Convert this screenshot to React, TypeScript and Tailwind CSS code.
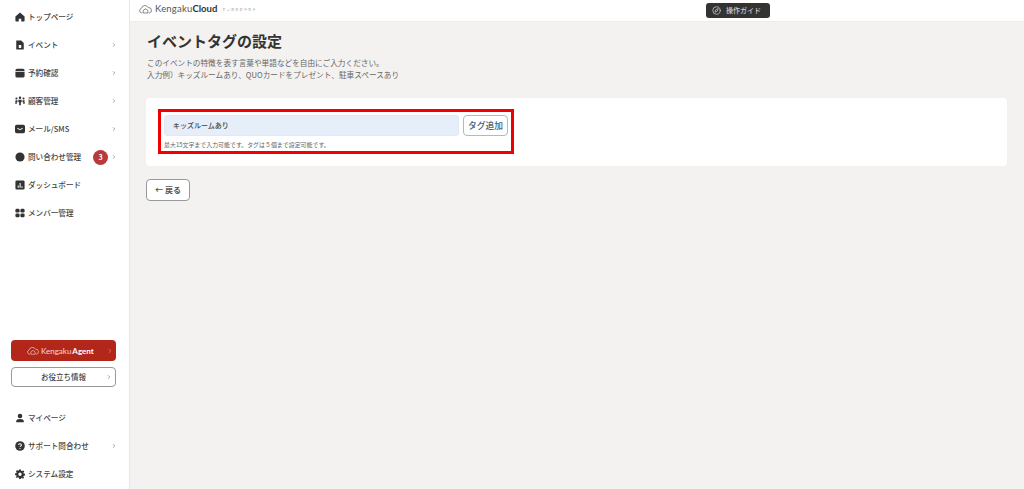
import { ChevronRight, Compass } from 'lucide-react';
import type { ReactNode } from 'react';

const icon = 'w-[10px] h-[10px] text-[#333] shrink-0';

const HomeIcon = () => (
    <svg viewBox="0 0 24 24" className={icon} fill="currentColor">
        <path d="M12 1 1 10.500V21a2 2 0 0 0 2 2h6v-7h6v7h6a2 2 0 0 0 2-2V10.500z" />
    </svg>
);
const FileIcon = () => (
    <svg viewBox="0 0 24 24" className={icon} fill="currentColor">
        <path fillRule="evenodd" d="M3 1h12l6 6v16H3zM9 12v7h6v-7z" />
    </svg>
);
const CalendarIcon = () => (
    <svg viewBox="0 0 24 24" className={icon} fill="currentColor">
        <path d="M5 2h14a4 4 0 0 1 4 4v2H1V6a4 4 0 0 1 4-4zM1 9.500h22V19a4 4 0 0 1-4 4H5a4 4 0 0 1-4-4z" />
    </svg>
);
const PeopleIcon = () => (
    <svg viewBox="0 0 24 24" className={icon} fill="currentColor">
        <circle cx="12" cy="4" r="3" />
        <circle cx="3.500" cy="6" r="2.500" />
        <circle cx="20.500" cy="6" r="2.500" />
        <path d="M8 9h8v6h-2v7h-4v-7H8z" />
        <path d="M1 10h5v5H4v4H1zM18 10h5v9h-3v-4h-2z" />
    </svg>
);
const MailIcon = () => (
    <svg viewBox="0 0 24 24" className={icon} fill="currentColor">
        <path fillRule="evenodd" d="M4 2h16a4 4 0 0 1 4 4v12a4 4 0 0 1-4 4H4a4 4 0 0 1-4-4V6a4 4 0 0 1 4-4zm2 7-1 1.500 7 4.500 7-4.500L18 9l-6 3.800z" />
    </svg>
);
const DotIcon = () => (
    <svg viewBox="0 0 24 24" className={icon} fill="currentColor">
        <circle cx="12" cy="12" r="11" />
    </svg>
);
const ChartIcon = () => (
    <svg viewBox="0 0 24 24" className={icon} fill="currentColor">
        <path fillRule="evenodd" d="M4 1h16a3 3 0 0 1 3 3v16a3 3 0 0 1-3 3H4a3 3 0 0 1-3-3V4a3 3 0 0 1 3-3zm2.500 12v5.500h2.500V13zm4.500-6v11.500h2.500V7zm4.500 8v3.500H18V15z" />
    </svg>
);
const GridIcon = () => (
    <svg viewBox="0 0 24 24" className={icon} fill="currentColor">
        <rect x="1" y="2" width="10" height="9" rx="3" />
        <rect x="13" y="2" width="10" height="9" rx="3" />
        <rect x="1" y="13" width="10" height="9" rx="3" />
        <rect x="13" y="13" width="10" height="9" rx="3" />
    </svg>
);
const UserIcon = () => (
    <svg viewBox="0 0 24 24" className={icon} fill="currentColor">
        <circle cx="12" cy="7" r="5.500" />
        <path d="M3 22v-2c0-3.500 3-5.500 9-5.500s9 2 9 5.500v2z" />
    </svg>
);
const HelpIcon = () => (
    <svg viewBox="0 0 24 24" className={icon}>
        <circle cx="12" cy="12" r="11.500" fill="currentColor" />
        <path d="M8.500 9.500C8.500 7.500 10 6.500 12 6.500s3.500 1.200 3.500 3c0 2.800-3.500 2.500-3.500 5" fill="none" stroke="#fff" strokeWidth="2.500" />
        <circle cx="12" cy="18" r="1.500" fill="#fff" />
    </svg>
);
const GearIcon = () => (
    <svg viewBox="0 0 24 24" className={icon} fill="currentColor">
        <path fillRule="evenodd" d="M10 1h4l.6 3 2.400 1 2.600-1.700 2.800 2.800L20 8.700l1 2.300 3 .6v3.800l-3 .6-1 2.300 1.700 2.600-2.800 2.800L17.300 21l-2.700 1-.6 2h-4l-.6-3-2.400-1-2.600 1.700-2.800-2.800L4 17.300 3 15l-3-.6v-3.800l3-.6 1-2.300L2.300 5.100l2.800-2.800L7 4l2.400-1zM12 8.500a4 4 0 1 0 0 8 4 4 0 0 0 0-8z" />
    </svg>
);

// cloud + house mark next to the product names
const CloudLogo = ({ className }: { className: string }) => (
    <svg viewBox="0 0 28 18" className={className} fill="none" stroke="currentColor" strokeWidth="1.500">
        <path d="M7 16.500H6a5 5 0 0 1-1-9.800A8 8 0 0 1 20 5a5.800 5.800 0 0 1 2 11.500h-1" />
        <path d="M9 16.500V11l5-3.500 5 3.500v5.500z" />
    </svg>
);

interface NavItem {
    label: string;
    icon: ReactNode;
    arrow?: boolean;
    badge?: string;
}

const mainNav: NavItem[] = [
    { label: 'トップページ', icon: <HomeIcon /> },
    { label: 'イベント', icon: <FileIcon />, arrow: true },
    { label: '予約確認', icon: <CalendarIcon />, arrow: true },
    { label: '顧客管理', icon: <PeopleIcon />, arrow: true },
    { label: 'メール/SMS', icon: <MailIcon />, arrow: true },
    { label: '問い合わせ管理', icon: <DotIcon />, arrow: true, badge: '3' },
    { label: 'ダッシュボード', icon: <ChartIcon /> },
    { label: 'メンバー管理', icon: <GridIcon /> },
];

const subNav: NavItem[] = [
    { label: 'マイページ', icon: <UserIcon /> },
    { label: 'サポート問合わせ', icon: <HelpIcon />, arrow: true },
    { label: 'システム設定', icon: <GearIcon /> },
];

function NavRow({ item }: { item: NavItem }) {
    return (
        <div className="h-[28px] pl-[15px] pr-[12px] flex items-center">
            {item.icon}
            <span className="ml-[3px] text-[7.6px] font-medium text-[#444] whitespace-nowrap">{item.label}</span>
            <div className="ml-auto flex items-center gap-[3px]">
                {item.badge && (
                    <span className="w-[15px] h-[15px] rounded-full bg-[#b93a3a] text-white text-[7px] font-bold flex items-center justify-center">
                        {item.badge}
                    </span>
                )}
                {item.arrow && <ChevronRight className="w-[6px] h-[6px] text-[#777]" strokeWidth={2.5} />}
            </div>
        </div>
    );
}

export default function App() {
    return (
        <div className="w-[1024px] h-[489px] overflow-hidden flex bg-[#f3f2f0] font-['Noto_Sans_CJK_JP','Noto_Sans',sans-serif]">
            {/* Sidebar */}
            <aside className="w-[130px] shrink-0 bg-white border-r border-[#e6e6e6] flex flex-col pt-[3px] pb-[1px]">
                {mainNav.map((item) => (
                    <NavRow key={item.label} item={item} />
                ))}

                <div className="mt-auto pl-[11px] pr-[13px] flex flex-col gap-[6px] mb-[17px]">
                    <div className="h-[21px] rounded-[4px] bg-[#b3261a] flex items-center relative pl-[16px] text-white/80">
                        <CloudLogo className="w-[12px] h-[8px] mr-[2px]" />
                        <span className="text-[8px] font-['Lato',sans-serif]">Kengaku</span>
                        <span className="ml-[1px] text-[8px] font-bold text-white font-['Lato',sans-serif]">Agent</span>
                        <ChevronRight className="absolute right-[3px] w-[6px] h-[6px] text-white/50" strokeWidth={2.5} />
                    </div>
                    <div className="h-[20px] rounded-[4px] bg-white border-[1.5px] border-[#999] flex items-center justify-center relative">
                        <span className="text-[7.5px] font-medium text-[#444]">お役立ち情報</span>
                        <ChevronRight className="absolute right-[3px] w-[6px] h-[6px] text-[#777]" strokeWidth={2.5} />
                    </div>
                </div>

                {subNav.map((item) => (
                    <NavRow key={item.label} item={item} />
                ))}
            </aside>

            <div className="flex-1 min-w-0 flex flex-col">
                {/* Header */}
                <header className="h-[22px] shrink-0 bg-white border-b border-[#ececec] flex items-center relative pl-[9px] pb-[2px]">
                    <CloudLogo className="w-[13px] h-[9px] text-[#555] mr-[3px]" />
                    <span className="text-[9.5px] text-[#555] font-['Lato',sans-serif] tracking-[0.2px]">Kengaku</span>
                    <span className="text-[9.5px] font-bold text-[#333] font-['Lato',sans-serif]">Cloud</span>
                    <span className="ml-[5px] text-[3.5px] text-[#777] tracking-[0.8px]">ケンガククラウド</span>
                    <div className="absolute left-[576px] top-[3px] w-[64px] h-[15px] rounded-[3px] bg-[#333] flex items-center pl-[6px] gap-[5px]">
                        <Compass className="w-[9px] h-[9px] text-[#ccc]" />
                        <span className="text-[7px] font-medium text-[#ccc]">操作ガイド</span>
                    </div>
                </header>

                {/* Content */}
                <main className="flex-1 pl-[16px] pr-[17px] pt-[8px]">
                    <h1 className="ml-[1px] text-[15px] leading-[22px] font-bold text-[#333]">イベントタグの設定</h1>
                    <p className="ml-[1px] mt-[5px] text-[7.65px] leading-[12px] text-[#666]">
                        このイベントの特徴を表す言葉や単語などを自由にご入力ください。
                        <br />
                        入力例）キッズルームあり、QUOカードをプレゼント、駐車スペースあり
                    </p>

                    <section className="mt-[17px] h-[68px] bg-white rounded-[4px] pl-[12px] pt-[11px]">
                        {/* Red annotation frame is part of the screenshot */}
                        <div className="w-[356px] h-[45px] border-[3px] border-[#f00000] pl-[3px] pt-[3px]">
                            <div className="flex gap-[4px]">
                                <div className="w-[295px] h-[21px] rounded-[3px] bg-[#e6eefa] border border-[#e0e8f4] flex items-center pl-[8px] text-[7px] font-medium text-[#444]">
                                    キッズルームあり
                                </div>
                                <button className="w-[45px] h-[21px] rounded-[4px] bg-white border-[1.5px] border-[#a9bccb] text-[8.75px] font-medium text-[#44607a] flex items-center justify-center">
                                    タグ追加
                                </button>
                            </div>
                            <p className="mt-[5px] text-[5.95px] leading-[8px] text-[#666] whitespace-nowrap">
                                最大15文字まで入力可能です。タグは５個まで設定可能です。
                            </p>
                        </div>
                    </section>

                    <button className="mt-[13px] w-[44px] h-[22px] rounded-[4px] bg-white border-[1.5px] border-[#999] text-[8px] font-bold text-[#555] flex items-center justify-center">
                        ← 戻る
                    </button>
                </main>
            </div>
        </div>
    );
}
